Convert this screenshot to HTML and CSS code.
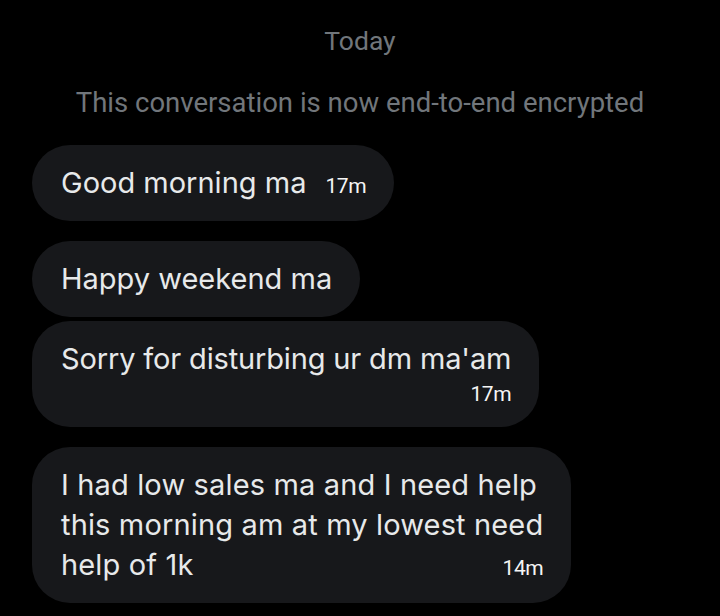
FILE: index.html
```html
<!DOCTYPE html>
<html lang="en">
<head>
    <meta charset="UTF-8">
    <meta name="viewport" content="width=device-width, initial-scale=1.0">
    <title>Messages</title>
    <link rel="stylesheet" href="styles.css">
</head>
<body>

    <div class="chat">
        <div class="day">Today</div>
        <div class="notice">This conversation is now end-to-end encrypted</div>

        <!-- group 1 -->
        <div class="msg first">
            <span class="text">Good morning ma</span><span class="time">17m</span>
        </div>

        <!-- group 2 -->
        <div class="msg group-start">
            <span class="text">Happy weekend ma</span>
        </div>
        <div class="msg stacked">
            <span class="text">Sorry for disturbing ur dm ma'am</span>
            <span class="time">17m</span>
        </div>

        <!-- group 3 -->
        <div class="msg group-start long">
            <p class="lines">I had low sales ma and I need help<br>this morning am at my lowest need</p>
            <div class="last-line">
                <span class="text">help of 1k</span><span class="time">14m</span>
            </div>
        </div>
    </div>

</body>
</html>
```

FILE: styles.css
```css
body {
    margin: 0;
    background-color: #000;
    font-family: Inter, "Noto Sans", sans-serif;
}

.chat {
    display: flex;
    flex-direction: column;
    align-items: flex-start;
    padding: 0 32px;
}

.day,
.notice {
    align-self: stretch;
    text-align: center;
    color: #71767b;
    font-family: Roboto, sans-serif;
}

.day {
    font-size: 26.5px;
    line-height: 30px;
    padding-top: 26px;
}

.notice {
    font-size: 27.5px;
    line-height: 32px;
    margin-top: 31px;
    margin-bottom: 26px;
}

.msg {
    width: fit-content;
    background-color: #17181b;
    color: #e7e9ea;
    font-size: 29px;
    line-height: 40px;
    padding: 18px 28px 18px 29px;
    border-radius: 38px;
    margin-top: 4px;
}

.msg.first {
    margin-top: 0;
}

.group-start {
    margin-top: 20px;
}

.stacked .text {
    letter-spacing: -0.15px;
}

.long {
    letter-spacing: 0.15px;
}

.lines {
    margin: 0;
}

.last-line {
    display: flex;
    justify-content: space-between;
    align-items: baseline;
    height: 40px;
}

.time {
    margin-left: 19px;
    font-family: Roboto, sans-serif;
    font-size: 21px;
    line-height: 20px;
    letter-spacing: -0.4px;
    color: #f5f5f5;
}

.stacked .text {
    display: block;
}

.stacked .time {
    display: block;
    text-align: right;
    line-height: 30px;
}
```
